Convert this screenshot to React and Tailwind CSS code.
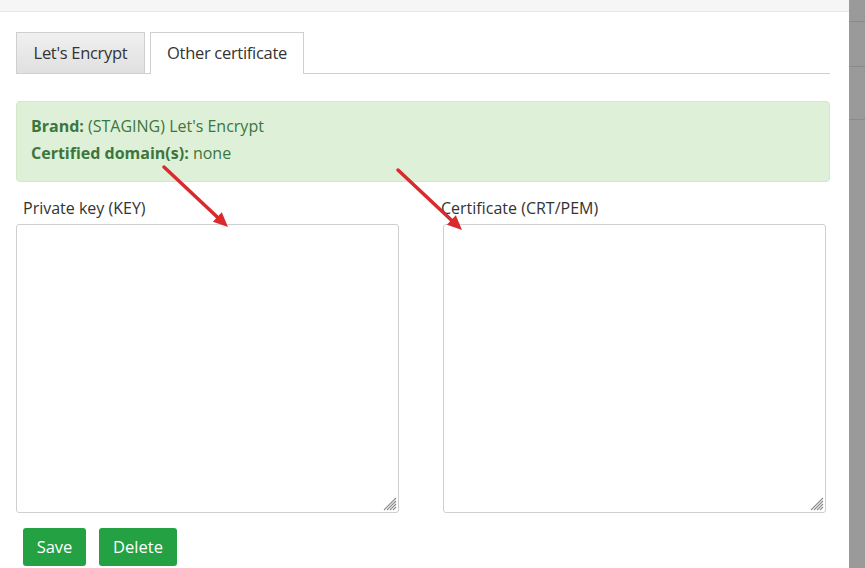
import React from 'react';

function Arrow({ x1, y1, x2, y2 }) {
  // red annotation arrow drawn over the page
  const angle = Math.atan2(y2 - y1, x2 - x1);
  const len = 16;
  const spread = 0.42;
  const ax = x2 - len * Math.cos(angle - spread);
  const ay = y2 - len * Math.sin(angle - spread);
  const bx = x2 - len * Math.cos(angle + spread);
  const by = y2 - len * Math.sin(angle + spread);
  const sx = x2 - 10 * Math.cos(angle);
  const sy = y2 - 10 * Math.sin(angle);
  return (
    <g>
      <line x1={x1} y1={y1} x2={sx} y2={sy} stroke="#d92a2e" strokeWidth="3.5" strokeLinecap="round" />
      <polygon points={`${x2},${y2} ${ax},${ay} ${bx},${by}`} fill="#d92a2e" />
    </g>
  );
}

function Grip() {
  return (
    <svg className="absolute right-[2px] bottom-[2px] pointer-events-none" width="14" height="14" viewBox="0 0 14 14">
      <g stroke="#8a8a8a" strokeWidth="1.1">
        <line x1="1" y1="13" x2="13" y2="1" />
        <line x1="4" y1="13" x2="13" y2="4" />
        <line x1="7" y1="13" x2="13" y2="7" />
        <line x1="10" y1="13" x2="13" y2="10" />
      </g>
    </svg>
  );
}

function Field({ label, labelClass }) {
  return (
    <div className="w-[383px] flex flex-col">
      <label className={`${labelClass} text-[16px] leading-[24px] text-[#333]`}>{label}</label>
      <div className="relative mt-[4px]">
        <textarea className="block h-[289px] w-[383px] border border-[#cfcfcf] rounded-[3px] bg-white resize-none" />
        <Grip />
      </div>
    </div>
  );
}

function App() {
  return (
    <div className="relative w-[865px] h-[568px] overflow-hidden bg-white flex text-[#333]" style={{ fontFamily: '"Open Sans", "Noto Sans", sans-serif' }}>
      <div className="w-[849px] flex flex-col">
        <div className="h-[12px] bg-[#f6f6f6] border-b border-[#e6e6e6]" />

        {/* tabs */}
        <div className="mt-[20px] ml-[16px] w-[814px] flex items-end border-b border-[#cfcfcf] h-[42px]">
          <button className="h-[41px] w-[129px] border border-[#cfcfcf] border-b-0 bg-gradient-to-b from-[#f0f0f0] to-[#e0e0e0] text-[16.5px] tracking-[-0.3px] text-[#333]">
            Let's Encrypt
          </button>
          <button className="ml-[5px] h-[42px] w-[154px] -mb-px border border-[#cfcfcf] border-b-0 bg-white text-[16.5px] tracking-[-0.3px] text-[#333]">
            Other certificate
          </button>
        </div>

        {/* alert */}
        <div className="mt-[27px] ml-[16px] w-[814px] h-[81px] rounded-[4px] bg-[#dff0d8] border border-[#d3e8c8] px-[14px] pt-[11px] text-[16px] leading-[27px] text-[#3c763d]">
          <div><b className="font-bold">Brand:</b> (STAGING) Let's Encrypt</div>
          <div><b className="font-bold">Certified domain(s):</b> none</div>
        </div>

        {/* key / cert */}
        <div className="ml-[16px] mt-[14px] flex gap-[44px]">
          <Field label="Private key (KEY)" labelClass="pl-[7px]" />
          <Field label="Certificate (CRT/PEM)" labelClass="-ml-[2px]" />
        </div>

        <div className="ml-[23px] mt-[15px] flex gap-[13px]">
          <button className="h-[38px] w-[63px] rounded-[3px] bg-[#23a143] text-white text-[16.5px]">Save</button>
          <button className="h-[38px] w-[78px] rounded-[3px] bg-[#23a143] text-white text-[16.5px]">Delete</button>
        </div>
      </div>

      {/* right gray strip */}
      <div className="w-[16px] bg-[#9a9a9a] flex flex-col">
        <div className="h-[22px] border-b border-[#8a8a8a]" />
        <div className="h-[45px] border-b border-[#8a8a8a]" />
        <div className="h-[53px] border-b border-[#8a8a8a]" />
      </div>

      <svg className="absolute inset-0 pointer-events-none" width="865" height="568">
        <Arrow x1={164} y1={167} x2={228} y2={227} />
        <Arrow x1={398} y1={170} x2={462} y2={230} />
      </svg>
    </div>
  );
}

export default App;
